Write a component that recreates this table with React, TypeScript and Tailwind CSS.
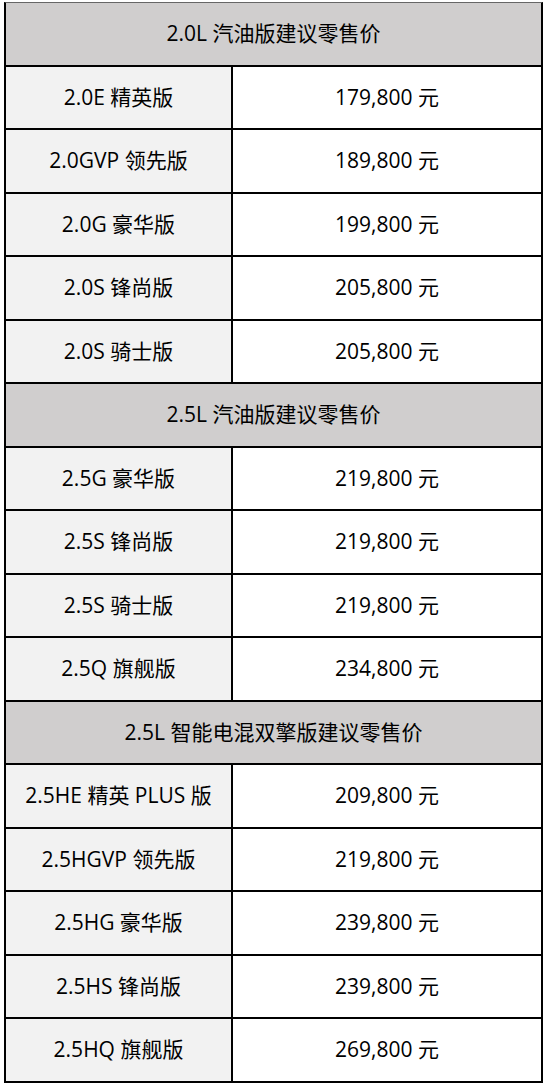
const sections = [
  {
    title: "2.0L 汽油版建议零售价",
    rows: [
      ["2.0E 精英版", "179,800 元"],
      ["2.0GVP 领先版", "189,800 元"],
      ["2.0G 豪华版", "199,800 元"],
      ["2.0S 锋尚版", "205,800 元"],
      ["2.0S 骑士版", "205,800 元"],
    ],
  },
  {
    title: "2.5L 汽油版建议零售价",
    rows: [
      ["2.5G 豪华版", "219,800 元"],
      ["2.5S 锋尚版", "219,800 元"],
      ["2.5S 骑士版", "219,800 元"],
      ["2.5Q 旗舰版", "234,800 元"],
    ],
  },
  {
    title: "2.5L 智能电混双擎版建议零售价",
    rows: [
      ["2.5HE 精英 PLUS 版", "209,800 元"],
      ["2.5HGVP 领先版", "219,800 元"],
      ["2.5HG 豪华版", "239,800 元"],
      ["2.5HS 锋尚版", "239,800 元"],
      ["2.5HQ 旗舰版", "269,800 元"],
    ],
  },
];

export default function App() {
  return (
    <div className="w-[546px] h-[1088px] bg-white pt-[2px] pl-[4px] font-['Open_Sans','Noto_Sans_CJK_SC',sans-serif] text-[21px] text-black">
      <div className="w-[539px] border-x-2 border-t border-black border-t-[#666]">
        {sections.map((s) => (
          <div key={s.title}>
            <div className="h-[63.5px] flex items-center justify-center bg-[#d0cece] border-b-2 border-black">
              {s.title}
            </div>
            {s.rows.map(([name, price]) => (
              <div key={name} className="h-[63.5px] flex border-b-2 border-black">
                <div className="w-[227px] flex items-center justify-center bg-[#f2f2f2] border-r-2 border-black">
                  {name}
                </div>
                <div className="flex-1 flex items-center justify-center bg-white">{price}</div>
              </div>
            ))}
          </div>
        ))}
      </div>
    </div>
  );
}
